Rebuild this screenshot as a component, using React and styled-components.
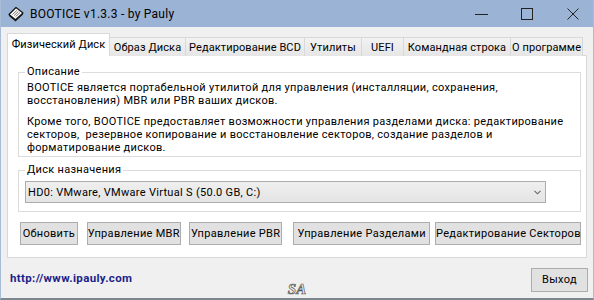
import React from 'react';
import styled, { createGlobalStyle } from 'styled-components';

const GlobalStyle = createGlobalStyle`
  body {
    margin: 0;
    font-family: Roboto, "Noto Sans", sans-serif;
    font-size: 11px;
    letter-spacing: 0.3px;
    color: #000;
  }
`;

const Window = styled.div`
  width: 594px;
  height: 300px;
  box-sizing: border-box;
  display: flex;
  flex-direction: column;
  overflow: hidden;
  background: #f0f0f0;
  border-left: 1px solid #a9bcd6;
  border-right: 1px solid #a9bcd6;
  border-bottom: 2px solid #7d8792;
`;

const TitleBar = styled.div`
  height: 27px;
  flex: none;
  display: flex;
  align-items: center;
  background: #9bb3d5;
`;

const AppIcon = styled.svg`
  margin-left: 7px;
  flex: none;
`;

const Title = styled.span`
  margin-left: 6px;
  font-size: 12px;
  letter-spacing: 0.25px;
  color: #000;
`;

const Captions = styled.div`
  margin-left: auto;
  margin-right: -3px;
  display: flex;
  height: 100%;
`;

const CaptionButton = styled.div`
  width: 46px;
  display: flex;
  align-items: center;
  justify-content: center;
`;

const Body = styled.div`
  flex: 1;
  display: flex;
  flex-direction: column;
  padding: 0 6px;
`;

const TabStrip = styled.div`
  margin-top: 6px;
  height: 23px;
  display: flex;
  align-items: flex-end;
`;

const Tab = styled.div`
  position: relative;
  z-index: ${p => (p.$active ? 1 : 0)};
  box-sizing: border-box;
  width: ${p => p.$w}px;
  height: ${p => (p.$active ? 23 : 19)}px;
  display: flex;
  align-items: center;
  justify-content: center;
  padding-bottom: ${p => (p.$active ? 2 : 0)}px;
  letter-spacing: 0.1px;
  background: ${p => (p.$active ? '#fff' : 'linear-gradient(#f2f2f2, #e6e6e6)')};
  border: 1px solid #d9d9d9;
  border-bottom: none;
  border-left: ${p => (p.$active ? '1px solid #d9d9d9' : 'none')};
  white-space: nowrap;
`;

const Panel = styled.div`
  margin-top: -1px;
  background: #fff;
  border: 1px solid #d9d9d9;
  padding: 9px 5px 12px 10px;
`;

const Group = styled.fieldset`
  margin: ${p => p.$top || 0}px 0 0;
  padding: ${p => p.$pad};
  border: 1px solid #dcdcdc;
  min-width: 0;
`;

const Legend = styled.legend`
  padding: 0 2px;
  margin-left: -2px;
  line-height: 14px;
`;

const Para = styled.p`
  margin: ${p => (p.$gap ? 8 : 0)}px 0 0;
  line-height: 13px;
`;

const Combo = styled.div`
  margin-left: -2px;
  width: 521px;
  height: 22px;
  box-sizing: border-box;
  display: flex;
  align-items: center;
  justify-content: space-between;
  padding: 0 4px 0 2px;
  background: linear-gradient(#efefef, #e4e4e4);
  border: 1px solid #acacac;
`;

const ButtonRow = styled.div`
  margin-top: 10px;
  display: flex;
`;

const Button = styled.button`
  margin-left: ${p => p.$ml || 0}px;
  width: ${p => p.$w}px;
  height: ${p => p.$h || 23}px;
  padding: 0;
  font: inherit;
  letter-spacing: inherit;
  color: #000;
  background: #e1e1e1;
  border: 1px solid #adadad;
  white-space: nowrap;
`;

const Footer = styled.div`
  flex: 1;
  display: grid;
  grid-template-columns: 1fr auto 1fr;
  align-items: center;
`;

const Link = styled.a`
  justify-self: start;
  margin-left: 3px;
  font-size: 11.5px;
  font-weight: bold;
  letter-spacing: 0.35px;
  color: #1b1f8a;
  text-decoration: none;
`;

const Signature = styled.span`
  justify-self: center;
  align-self: end;
  margin-bottom: 2px;
  font-family: "Liberation Serif", serif;
  font-style: italic;
  font-weight: bold;
  font-size: 15px;
  line-height: 14px;
  letter-spacing: 0;
  color: #ececec;
  -webkit-text-stroke: 0.7px #555;
`;

const ExitWrap = styled.div`
  justify-self: end;
  margin-right: -1px;
  margin-top: 3px;
`;

const tabs = [
  ['Физический Диск', 103, true],
  ['Образ Диска', 76],
  ['Редактирование BCD', 119],
  ['Утилиты', 57],
  ['UEFI', 42],
  ['Командная строка', 107],
  ['О программе', 72],
];

const buttons = [
  ['Обновить', 58, 2],
  ['Управление MBR', 94, 9],
  ['Управление PBR', 94, 8],
  ['Управление Разделами', 137, 11],
  ['Редактирование Секторов', 146, 5],
];

export default function App() {
  return (
    <Window>
      <GlobalStyle />
      <TitleBar>
        <AppIcon width="16" height="16" viewBox="0 0 16 16">
          <path d="M1 8.5 L1 10 L7.5 15.5 L15 8.5 L15 7 L7.5 13.8 Z" fill="#1a1a1a" />
          <path d="M1 8.5 L8 1.5 L15 7 L7.5 13.8 Z" fill="#fff" stroke="#111" strokeWidth="1.2" strokeLinejoin="round" />
          <path d="M4.5 8.5 L9 4.3 M6 9.6 L10.5 5.4 M7.5 10.7 L12 6.5" stroke="#777" strokeWidth="1" />
        </AppIcon>
        <Title>BOOTICE v1.3.3 - by Pauly</Title>
        <Captions>
          <CaptionButton>
            <svg width="13" height="12" viewBox="0 0 13 12"><path d="M0 6.5 H13" stroke="#222" /></svg>
          </CaptionButton>
          <CaptionButton>
            <svg width="12" height="12" viewBox="0 0 12 12"><rect x="0.5" y="0.5" width="11" height="11" fill="none" stroke="#222" /></svg>
          </CaptionButton>
          <CaptionButton>
            <svg width="12" height="12" viewBox="0 0 12 12"><path d="M0.5 0.5 L11.5 11.5 M11.5 0.5 L0.5 11.5" stroke="#222" /></svg>
          </CaptionButton>
        </Captions>
      </TitleBar>

      <Body>
        <TabStrip>
          {tabs.map(([label, w, active]) => (
            <Tab key={label} $w={w} $active={active}>{label}</Tab>
          ))}
        </TabStrip>

        <Panel>
          <Group $pad="2px 8px 2px">
            <Legend>Описание</Legend>
            <Para>
              BOOTICE является портабельной утилитой для управления (инсталляции, сохранения,
              <br />
              восстановления) MBR или PBR ваших дисков.
            </Para>
            <Para $gap>
              Кроме того, BOOTICE предоставляет возможности управления разделами диска: редактирование
              <br />
              секторов,&nbsp; резервное копирование и восстановление секторов, создание разделов и
              <br />
              форматирование дисков.
            </Para>
          </Group>

          <Group $top={6} $pad="4px 8px 8px">
            <Legend>Диск назначения</Legend>
            <Combo>
              <span>HD0: VMware, VMware Virtual S (50.0 GB, C:)</span>
              <svg width="7" height="5" viewBox="0 0 7 5"><path d="M0.5 0.8 L3.5 3.8 L6.5 0.8" fill="none" stroke="#666" strokeWidth="1.1" /></svg>
            </Combo>
          </Group>

          <ButtonRow>
            {buttons.map(([label, w, ml]) => (
              <Button key={label} $w={w} $ml={ml}>{label}</Button>
            ))}
          </ButtonRow>
        </Panel>

        <Footer>
          <Link href="#">http://www.ipauly.com</Link>
          <Signature>SA</Signature>
          <ExitWrap>
            <Button $w={57} $h={24}>Выход</Button>
          </ExitWrap>
        </Footer>
      </Body>
    </Window>
  );
}
